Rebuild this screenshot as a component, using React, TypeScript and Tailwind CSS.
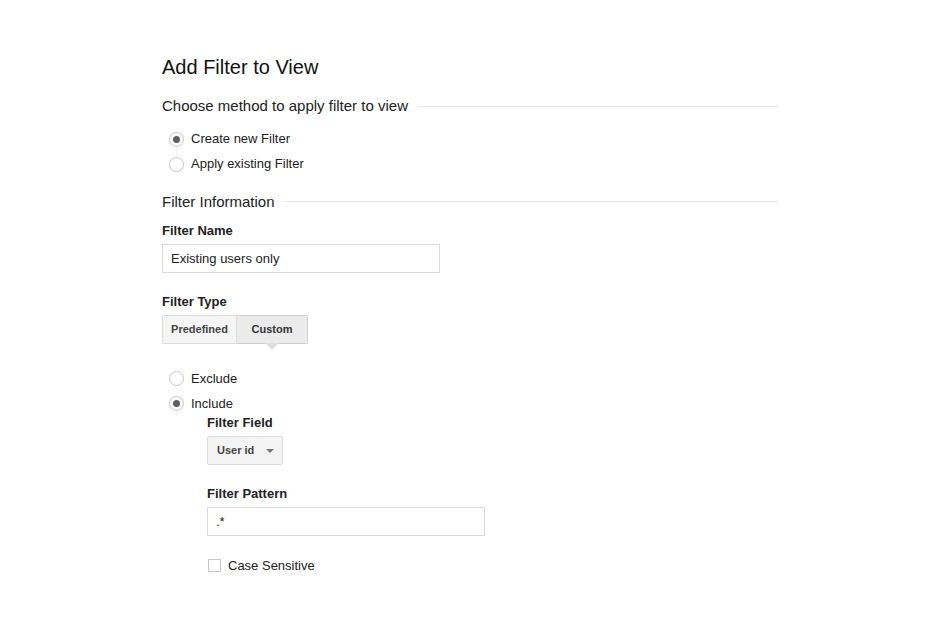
import React from "react";

const Radio: React.FC<{ checked?: boolean; label: string }> = ({ checked, label }) => (
  <label className="flex h-[25px] items-center gap-[7px]">
    <span className="ml-[7px] flex h-[15px] w-[15px] items-center justify-center rounded-full border border-[#c6c6c6] bg-white">
      {checked && <span className="h-[7px] w-[7px] rounded-full bg-[#5f5f5f]" />}
    </span>
    <span className="text-[13px] text-[#222]">{label}</span>
  </label>
);

const SectionHeading: React.FC<{ title: string }> = ({ title }) => (
  <div className="flex items-center gap-[10px]">
    <span className="text-[15px] text-[#222]">{title}</span>
    <span className="h-px flex-1 bg-[#e3e3e3]" />
  </div>
);

export default function App() {
  return (
    <div className="min-h-[640px] w-[928px] bg-white font-['Liberation_Sans',Arial,sans-serif] text-[#222]">
      <div className="ml-[162px] w-[616px] pt-[54px]">
        <h1 className="text-[20px] leading-[26px] text-[#111]">Add Filter to View</h1>

        <div className="mt-[15px]">
          <SectionHeading title="Choose method to apply filter to view" />
        </div>
        <div className="mt-[9px] flex flex-col">
          <Radio checked label="Create new Filter" />
          <Radio label="Apply existing Filter" />
        </div>

        <div className="mt-[14px]">
          <SectionHeading title="Filter Information" />
        </div>

        <div className="mt-[8px] text-[13px] font-bold text-[#222]">Filter Name</div>
        <input
          readOnly
          value="Existing users only"
          className="mt-[3px] h-[29px] w-[278px] border border-[#d9d9d9] px-[8px] text-[13px] text-[#222] outline-none"
        />

        <div className="mt-[19px] text-[13px] font-bold">Filter Type</div>
        <div className="mt-[4px] flex">
          <div className="flex h-[29px] w-[75px] items-center justify-center rounded-l-[2px] border border-[#dcdcdc] bg-[#f5f5f5] text-[11px] font-bold text-[#444]">
            Predefined
          </div>
          <div className="relative flex h-[29px] w-[71px] items-center justify-center rounded-r-[2px] border border-l-0 border-[#d0d0d0] bg-[#ebebeb] text-[11px] font-bold text-[#333]">
            Custom
            <span className="absolute left-1/2 top-full -ml-[7px] h-0 w-0 border-x-[7px] border-t-[7px] border-x-transparent border-t-[#dedede]" />
          </div>
        </div>

        <div className="mt-[22px] flex flex-col">
          <Radio label="Exclude" />
          <Radio checked label="Include" />
        </div>

        <div className="ml-[45px]">
          <div className="-mt-[3px] text-[13px] font-bold">Filter Field</div>
          <div className="mt-[3px] flex h-[29px] w-[76px] items-center rounded-[2px] border border-[#dcdcdc] bg-[#f3f3f3] pl-[9px] text-[11px] font-bold text-[#444]">
            User id
            <span className="ml-[12px] mt-[2px] h-0 w-0 border-x-[4px] border-t-[4px] border-x-transparent border-t-[#777]" />
          </div>

          <div className="mt-[19px] text-[13px] font-bold">Filter Pattern</div>
          <input
            readOnly
            value=".*"
            className="mt-[4px] h-[29px] w-[278px] border border-[#d9d9d9] px-[8px] text-[13px] text-[#222] outline-none"
          />

          <label className="mt-[20px] flex items-center gap-[7px]">
            <span className="ml-[1px] h-[13px] w-[13px] border border-[#c6c6c6] bg-white" />
            <span className="text-[13px] text-[#222]">Case Sensitive</span>
          </label>
        </div>
      </div>
    </div>
  );
}
